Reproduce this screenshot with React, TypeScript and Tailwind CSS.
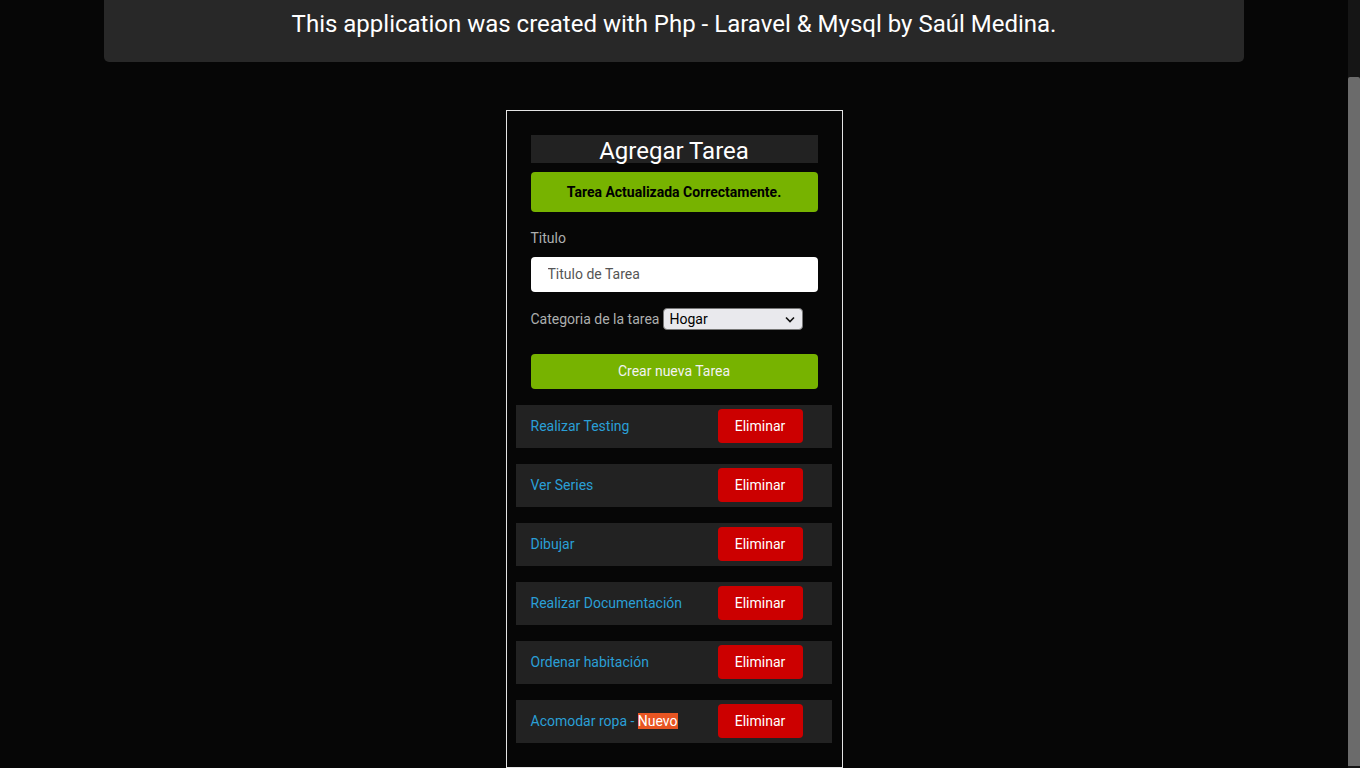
const tasks = [
  { title: "Realizar Testing", isNew: false },
  { title: "Ver Series", isNew: false },
  { title: "Dibujar", isNew: false },
  { title: "Realizar Documentación", isNew: false },
  { title: "Ordenar habitación", isNew: false },
  { title: "Acomodar ropa - ", isNew: true },
];

export default function App() {
  return (
    <div className="flex h-screen overflow-hidden bg-[#060606] font-['Roboto',sans-serif]">
      <main className="flex-1">
        <header className="mx-auto h-[62px] w-[1140px] rounded-b-[5px] bg-[#282828] pt-[10px] text-center text-[24px] leading-[28px] text-white">
          This application was created with Php - Laravel &amp; Mysql by Saúl Medina.
        </header>

        <div className="mx-auto mt-[48px] w-[337px] border border-[#e4e4e4] px-[24px] pt-[24px] pb-[24px]">
          <h1 className="h-[28px] bg-[#222] pt-[2px] text-center text-[24px] leading-[28px] text-white">Agregar Tarea</h1>

          <div className="mt-[9px] flex h-[40px] items-center justify-center rounded-[4px] bg-[#77b300] text-[14px] font-bold text-black">
            Tarea Actualizada Correctamente.
          </div>

          <label className="mt-[16px] block text-[14px] leading-[20px] text-[#adafae]">Titulo</label>
          <input
            type="text"
            placeholder="Titulo de Tarea"
            className="mt-[9px] h-[35px] w-full rounded-[4px] bg-white pb-[2px] pl-[17px] text-[14px] text-black placeholder:text-[#555]"
          />

          <div className="mt-[16px] flex h-[22px] items-center gap-[4px] text-[14px] text-[#adafae]">
            <span>Categoria de la tarea</span>
            <div className="relative">
              <select className="block h-[22px] w-[140px] appearance-none rounded-[4px] border border-[#767676] bg-[#e9e9ed] pl-[5px] text-[14px] leading-[18px] text-black">
                <option>Hogar</option>
                <option>Trabajo</option>
                <option>Estudio</option>
              </select>
              <svg
                className="pointer-events-none absolute top-[8px] right-[8px] h-[7px] w-[10px]"
                viewBox="0 0 10 7"
                fill="none"
                stroke="#111"
                strokeWidth="1.6"
              >
                <path d="M1 1.5l4 4 4-4" />
              </svg>
            </div>
          </div>

          <button className="mt-[24px] h-[35px] w-full rounded-[4px] bg-[#77b300] text-[14px] text-[#f2f2f2]">
            Crear nueva Tarea
          </button>

          <div className="mt-[16px] ml-[-15px] mr-[-14px] flex flex-col gap-[16px]">
            {tasks.map((task, i) => (
              <div key={i} className="flex h-[43px] items-start bg-[#222] pl-[15px] pt-[4px]">
                <div className="w-[187px] pt-[7px] text-[14px] leading-[20px] text-[#2a9fd6]">
                  <a href="#">{task.title}</a>
                  {task.isNew && <span className="bg-[#e85522] text-white">Nuevo</span>}
                </div>
                <button className="h-[34px] w-[85px] rounded-[4px] bg-[#cc0000] text-[14px] text-white">Eliminar</button>
              </div>
            ))}
          </div>
        </div>
      </main>

      <div className="flex w-[12px] justify-center bg-[#151515] pt-[77px] pb-[2px]">
        <div className="w-[6px] flex-1 rounded-t-[2px] bg-[#6b6b6b]" />
      </div>
    </div>
  );
}
